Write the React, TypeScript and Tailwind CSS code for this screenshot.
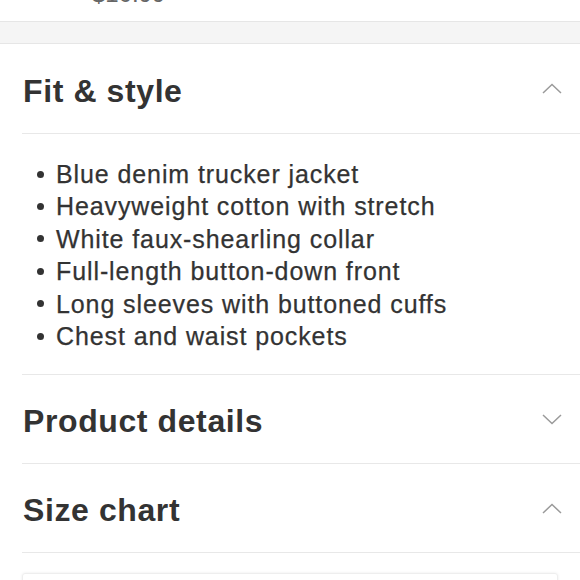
import { ReactNode } from 'react';

const features = [
  'Blue denim trucker jacket',
  'Heavyweight cotton with stretch',
  'White faux-shearling collar',
  'Full-length button-down front',
  'Long sleeves with buttoned cuffs',
  'Chest and waist pockets',
];

function Chevron({ up }: { up?: boolean }) {
  return (
    <svg width="20" height="11" viewBox="0 0 20 11" fill="none" className="shrink-0">
      <path
        d={up ? 'M1 10L10 1.5L19 10' : 'M1 1L10 9.5L19 1'}
        stroke="#9a9a9a"
        strokeWidth="1.5"
      />
    </svg>
  );
}

function SectionHeader({ title, open, height }: { title: string; open?: boolean; height: string }) {
  return (
    <div className={`ml-[22px] pr-[18px] flex items-center justify-between border-b border-[#e8e8e8] ${height}`}>
      <h2 className="mt-1 pl-px text-[32px] leading-none font-bold tracking-[0.6px] text-[#333333]">{title}</h2>
      <Chevron up={open} />
    </div>
  );
}

function Section({ children }: { children: ReactNode }) {
  return <div>{children}</div>;
}

export default function App() {
  return (
    <div
      className="w-[580px] h-[580px] overflow-hidden bg-white"
      style={{ fontFamily: '"Liberation Sans", Arial, Helvetica, sans-serif' }}
    >
      <div className="h-[21px] overflow-hidden">
        <div className="ml-[92px] -mt-[18px] text-[24px] leading-[24px] text-[#666666]">$10.99</div>
      </div>
      <div className="h-[23px] bg-[#f5f5f5] border-y border-[#e6e6e6]"></div>

      <Section>
        <SectionHeader title="Fit & style" open height="h-[90px]" />
        <div className="ml-[22px] h-[241px] border-b border-[#e8e8e8] pt-[24px]">
          <ul>
            {features.map((f) => (
              <li key={f} className="flex items-center h-[32.4px]">
                <span className="ml-[15px] w-[7px] h-[7px] rounded-full bg-[#333333] shrink-0"></span>
                <span className="ml-[12px] text-[25px] leading-[32.4px] tracking-[0.9px] text-[#333333] [-webkit-text-stroke:0.25px_#333333] whitespace-nowrap">
                  {f}
                </span>
              </li>
            ))}
          </ul>
        </div>
      </Section>

      <Section>
        <SectionHeader title="Product details" height="h-[89px]" />
      </Section>

      <Section>
        <SectionHeader title="Size chart" open height="h-[89px]" />
      </Section>

      <div className="ml-[22px] mr-[22px] mt-[20px] h-[60px] rounded-[3px] border border-[#eeeeee] shadow-[0_0_3px_rgba(0,0,0,0.08)]"></div>
    </div>
  );
}
